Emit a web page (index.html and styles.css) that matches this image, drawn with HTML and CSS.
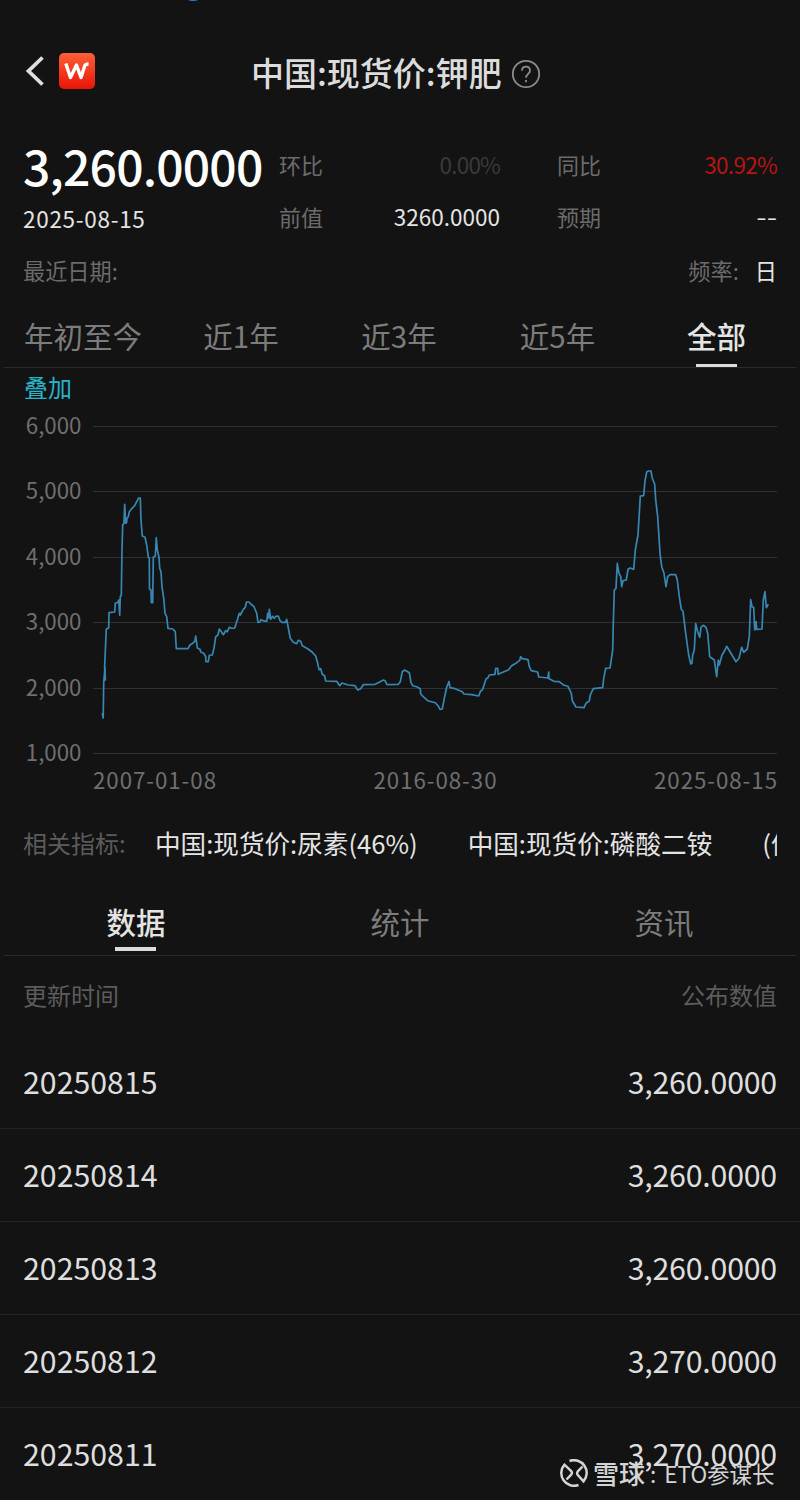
FILE: index.html
```html
<!DOCTYPE html>
<html lang="zh-CN">
<head>
    <meta charset="UTF-8">
    <meta name="viewport" content="width=device-width, initial-scale=1.0">
    <title>中国:现货价:钾肥</title>
    <link rel="stylesheet" href="styles.css">
</head>
<body>
    <div class="status-dot"></div>

    <header class="header">
        <div class="nav">
            <svg class="back" width="20" height="32" viewBox="0 0 20 32"><path d="M17.500 2.500L3.500 16l14 13.500"/></svg>
            <svg class="logo" width="36" height="36" viewBox="0 0 36 36">
                <defs>
                    <linearGradient id="logoFill" x1="0" y1="0" x2="0" y2="1">
                        <stop offset="0" stop-color="#fb6137"/>
                        <stop offset="1" stop-color="#e91407"/>
                    </linearGradient>
                </defs>
                <rect width="36" height="36" rx="5" fill="url(#logoFill)"/>
                <path d="M6.800 10.500l4.700 14 6-12.500 4.500 12.500 3.500-11c.6-2 1.700-2.500 4-2.500"/>
            </svg>
        </div>
        <h1 class="title">中国:现货价:钾肥</h1>
        <svg class="help" width="30" height="30" viewBox="0 0 30 30">
            <circle cx="15" cy="15" r="13.2"/>
            <path d="M11 11.800c0-2.700 1.600-4.200 4-4.200s4 1.500 4 3.800c0 3.300-4 3.600-4 7.400"/>
            <path d="M15 21v2.200"/>
        </svg>
    </header>

    <section class="quote">
        <div class="price">3,260.0000</div>
        <div class="stat"><span>环比</span><b class="flat">0.00%</b></div>
        <div class="stat"><span>同比</span><b class="up">30.92%</b></div>
        <div class="date">2025-08-15</div>
        <div class="stat"><span>前值</span><b>3260.0000</b></div>
        <div class="stat"><span>预期</span><b class="dashes">--</b></div>
    </section>
    <div class="meta">
        <span>最近日期:</span>
        <span>频率:<b>日</b></span>
    </div>

    <nav class="ranges">
        <a>年初至今</a>
        <a>近1年</a>
        <a>近3年</a>
        <a>近5年</a>
        <a class="active">全部</a>
    </nav>

    <div class="overlay-link">叠加</div>
    <svg class="chart" width="800" height="400" viewBox="0 405 800 400">
        <path class="grid" d="M93 426.500H777M93 491.500H777M93 557.500H777M93 622.500H777M93 688.500H777M93 753.500H777"/>
        <g class="y-axis">
            <text x="81.500" y="434">6,000</text>
            <text x="81.500" y="499">5,000</text>
            <text x="81.500" y="565">4,000</text>
            <text x="81.500" y="630">3,000</text>
            <text x="81.500" y="696">2,000</text>
            <text x="81.500" y="761">1,000</text>
        </g>
        <g class="x-axis">
            <text x="93" y="789" textLength="123">2007-01-08</text>
            <text x="373.500" y="789" textLength="123">2016-08-30</text>
            <text x="654" y="789" textLength="123">2025-08-15</text>
        </g>
        <path class="line" d="M102.300 713L103.200 718 103.700 683 105 667 105.300 680 104.600 667 106.300 629 108.700 628 109 612.700 114.700 612 115.300 603.300 118 602.300 118.700 600 119.700 615.300 120.300 596.700 121.300 595 122 550 122.700 525 124 523 124.700 504.300 125.700 523.300 126.500 523 127 518.300 128.300 516.700 129.300 511.700 132 508.300 134.700 505.700 136.700 501.700 138.700 498 140.300 498 141 520 142.300 536 145 537.300 146.700 545 148.300 557.300 149.300 558 149.500 589 151 590 151.300 602.700 152.700 602.700 153.300 557.300 155.300 556 156.300 537.700 157.300 550 159 557.300 159.700 568.300 161 572 162 586.700 163.700 598.300 165 613.300 166.700 616.700 168 628.300 172.700 629 175.300 631.700 176.300 648.700 188 648.700 190 645 192.700 643.300 195 641 195.700 636 197.300 648 200 649.300 200.700 652 203.700 653.300 205.700 656.700 205.900 661.700 208.300 661.700 209.300 655.300 212.300 655 214 648.300 215.700 636.700 218 635 219.300 629 221.300 631.700 223.300 634.700 225.700 630.700 227.300 631.700 229.300 627.300 231.700 628.300 234.700 628 237.300 620 239.300 613.300 240.300 615 243.300 609.300 245.300 607.300 246.500 602 249 602 250.700 604 254 606.700 256.700 613.300 258 622.300 260 622 261 619.700 263.300 620.700 266.700 621.300 267.700 613.300 268.800 618 269.300 609.300 270.700 619.300 272.700 616.300 274.300 618.300 276 616.300 278.300 616 280 620.700 282 622.300 285.700 622.300 286.700 619.300 288.700 630 290.300 638.300 293.300 642.300 296.700 643.700 298.300 640.300 300.700 641.300 302.300 645.700 307.700 648.700 311.700 651.700 315.700 656 317.700 663.300 319 669.700 320.700 668.700 322.300 674.300 324.700 676 325.700 681 336.700 681.300 339.700 685.700 342 683 348.300 685 355 685.700 357.700 690 360.700 688.700 363.300 684.700 375 684.300 379.300 682.300 383.300 680 385 680.700 387 684.700 398.300 684.300 400.300 681.700 402.300 671.700 404.700 670 409.300 672.700 411 682.700 412.700 685.700 416.700 686.700 420.300 688.700 420.700 694 424 697.300 427.700 700.700 435.300 702.700 438 705.700 440 709.300 442.300 709 444.300 698.300 446.700 687.300 449 681.500 450 687.700 455 688.700 462.300 691.700 464 694 471.700 694.700 478.700 696 480.300 691.700 482.700 689.300 486 679 488 677.700 489.300 675 495 674.300 495.700 668.300 497.700 668.300 498.300 674.300 503.300 672 508.300 670 511.700 665.700 516.700 662.700 519.700 660.300 520.700 656.700 522.300 658.700 528 659.700 529.300 666.700 531.300 670.700 537.700 672 538.700 677 548 678 548.700 672 549 678.700 554 681.300 559.300 681.700 564 685.300 568 686.300 571.300 693.300 572.300 700.700 576 707 584 707.700 586 703.300 589.300 701 590.300 695 593.300 688.700 602.700 687.700 603.700 678.300 605.700 668.300 610 668 612.700 650 613.300 623.300 614.300 590 616 588.300 617.300 563.300 619 573.300 620.700 576.700 621.700 586.700 623 580.700 626.300 580 628 569.300 630 568 633.700 569.300 635.300 550 638 535 639.300 513.300 640.300 496 643.700 495.700 645 480.700 646.700 472 648.300 471 651 471 652.300 478.300 654.700 484.300 655.700 500 657.700 516.700 660 553.300 661.700 566.700 664 573.300 666 586.700 667.700 576.700 670 574.700 675.700 574.700 677.300 580 679.300 596.700 681.300 609.300 683 611.300 685.700 633.300 688.700 655 690.700 664 692 663.300 692.700 655 694.300 650 695.700 623.700 697.700 631.700 699.700 637.300 701 627.300 703.300 625.300 706 627.300 707.700 633.300 709.700 656.700 714.300 660 716.700 676.700 718.300 660 719.300 665 722 655 725 650 726.700 646.300 730 651.700 733.300 657.300 736 661.700 739 658.300 741.700 647.300 743.700 652.300 747.300 649 749.300 636.700 750.700 599.700 752 606.700 753.700 607.300 754.700 630 756 621.700 756.700 629.300 762 629 763.300 600 765 591.700 766.300 607.700 768.300 604.300"/>
    </svg>

    <div class="related">
        <span class="related-label">相关指标:</span>
        <div class="related-list">
            <a>中国:现货价:尿素(46%)</a>
            <a>中国:现货价:磷酸二铵</a>
            <a>(停)</a>
        </div>
    </div>

    <nav class="tabs">
        <a class="active">数据</a>
        <a>统计</a>
        <a>资讯</a>
    </nav>

    <div class="table-head"><span>更新时间</span><span>公布数值</span></div>
    <div class="row"><span>20250815</span><span class="value">3,260.0000</span></div>
    <div class="row"><span>20250814</span><span class="value">3,260.0000</span></div>
    <div class="row"><span>20250813</span><span class="value">3,260.0000</span></div>
    <div class="row"><span>20250812</span><span class="value">3,270.0000</span></div>
    <div class="row"><span>20250811</span><span class="value">3,270.0000</span></div>

    <div class="watermark">
        <svg width="28" height="28" viewBox="0 0 28 28">
            <path d="M9.500 2A12.700 12.700 0 0 1 23.500 22.300L17.800 16q-1.400-1.800 0-3.600L22.500 7.500"/>
            <path d="M18.500 26A12.700 12.700 0 0 1 4.500 5.700L11.200 12q1.400 1.800 0 3.600L6.500 20.500"/>
        </svg>
        <span class="brand">雪球</span><span class="colon">:</span><span>ETO参谋长</span>
    </div>
</body>
</html>
```
FILE: styles.css
```css
body {
    position: relative;
    width: 800px;
    height: 1500px;
    margin: 0;
    overflow: hidden;
    background: #131313;
    color: #e4e4e4;
    font-family: "Noto Sans CJK SC", "Noto Sans", sans-serif;
    font-size: 22.5px;
    line-height: 1;
}
b {
    font-weight: 400;
}
.status-dot {
    position: absolute;
    left: 179px;
    top: -27px;
    width: 28px;
    height: 28px;
    border-radius: 50%;
    background: #2f7de0;
}

/* header */
.header {
    display: grid;
    grid-template-columns: 251px auto 1fr;
    align-items: center;
    height: 66px;
    padding-top: 40px;
}
.nav {
    display: flex;
    align-items: center;
    gap: 14px;
    padding: 0 0 5px 25px;
}
.back path {
    fill: none;
    stroke: #dedede;
    stroke-width: 3.8;
}
.logo path {
    fill: none;
    stroke: #fff;
    stroke-width: 3.4;
    stroke-linejoin: round;
}
.title {
    margin: -2px 0 0;
    font-size: 33px;
    font-weight: 500;
    color: #dcdcdc;
}
.help {
    margin: 2px 0 0 9px;
    fill: none;
    stroke: #8c8c8c;
    stroke-width: 1.8;
}

/* latest value */
.quote {
    display: grid;
    grid-template-columns: 256px 278px 220px;
    grid-template-rows: 52px 52px;
    align-items: center;
    height: 104px;
    padding: 32px 23px 0;
}
.price {
    padding-top: 2px;
    font-size: 48px;
    font-weight: 500;
    letter-spacing: -0.8px;
    color: #fff;
    white-space: nowrap;
}
.date {
    letter-spacing: 0.7px;
    padding-top: 4px;
}
.stat {
    display: flex;
    justify-content: space-between;
    align-items: center;
}
.stat:nth-child(3n + 2) {
    padding-right: 57px;
}
.stat span {
    font-size: 22px;
    color: #6b6b6b;
}
.flat {
    color: #3a3a3a;
    letter-spacing: -0.8px;
}
.up {
    color: #b81414;
    letter-spacing: -0.7px;
}
.dashes {
    height: 26px;
    line-height: 24px;
    font-size: 31px;
    font-weight: 300;
}
.meta {
    display: flex;
    justify-content: space-between;
    align-items: center;
    height: 56px;
    padding: 0 23px;
    font-size: 22.2px;
    color: #6b6b6b;
}
.meta b {
    margin-left: 16px;
    color: #e4e4e4;
}

/* range tabs */
.ranges {
    display: grid;
    grid-template-columns: 158px 158px 158px 159px 159px;
    height: 69px;
    margin: 0 4px;
    border-bottom: 1px solid #2b2b2b;
}
.ranges a,
.tabs a {
    position: relative;
    text-align: center;
    line-height: 75px;
    font-size: 29.5px;
    color: #7c7c7c;
}
.ranges .active,
.tabs .active {
    color: #e4e4e4;
    font-weight: 500;
}
.ranges .active::after,
.tabs .active::after {
    content: "";
    position: absolute;
    left: 50%;
    bottom: 6px;
    width: 41px;
    height: 3px;
    margin-left: -21px;
    background: #dcdcdc;
}

/* chart */
.overlay-link {
    height: 37px;
    padding-left: 24px;
    line-height: 38px;
    font-size: 24px;
    color: #27b4cb;
}
.chart {
    display: block;
}
.chart text {
    font-size: 22.3px;
    fill: #6f6f6f;
}
.y-axis {
    text-anchor: end;
}
.grid {
    stroke: #303030;
}
.line {
    fill: none;
    stroke: #3787b3;
    stroke-width: 1.7;
    stroke-linejoin: round;
}

/* related indicators */
.related {
    display: flex;
    align-items: center;
    height: 75px;
    padding: 0 23px 2px;
}
.related-label {
    flex: none;
    width: 132px;
    font-size: 24px;
    color: #5c5c5c;
}
.related-list {
    display: flex;
    gap: 50px;
    overflow: hidden;
    line-height: 40px;
    font-size: 25.6px;
    white-space: nowrap;
}

/* lower tabs */
.tabs {
    display: grid;
    grid-template-columns: repeat(3, 264px);
    height: 73px;
    margin: 0 4px;
    border-bottom: 1px solid #2b2b2b;
}
.tabs a {
    line-height: 78px;
}
.tabs .active::after {
    bottom: 9px;
    height: 4px;
}

/* history table */
.table-head,
.row {
    display: flex;
    justify-content: space-between;
    align-items: center;
    padding: 0 23px 2px;
}
.table-head {
    height: 78px;
    font-size: 24px;
    color: #5c5c5c;
}
.row {
    height: 90px;
    border-bottom: 1px solid #242424;
    font-size: 30.3px;
    color: #dedede;
}
.value {
    letter-spacing: -0.2px;
}

.watermark {
    position: absolute;
    left: 560px;
    top: 1459px;
    display: flex;
    align-items: center;
    height: 28px;
    font-size: 22.5px;
    color: #d4d4d4;
    white-space: nowrap;
}
.watermark svg {
    margin-right: 5px;
    fill: none;
    stroke: #d4d4d4;
    stroke-width: 2.5;
}
.brand {
    font-size: 26px;
    font-weight: 500;
}
.colon {
    margin: 0 8px 0 5px;
}
```
